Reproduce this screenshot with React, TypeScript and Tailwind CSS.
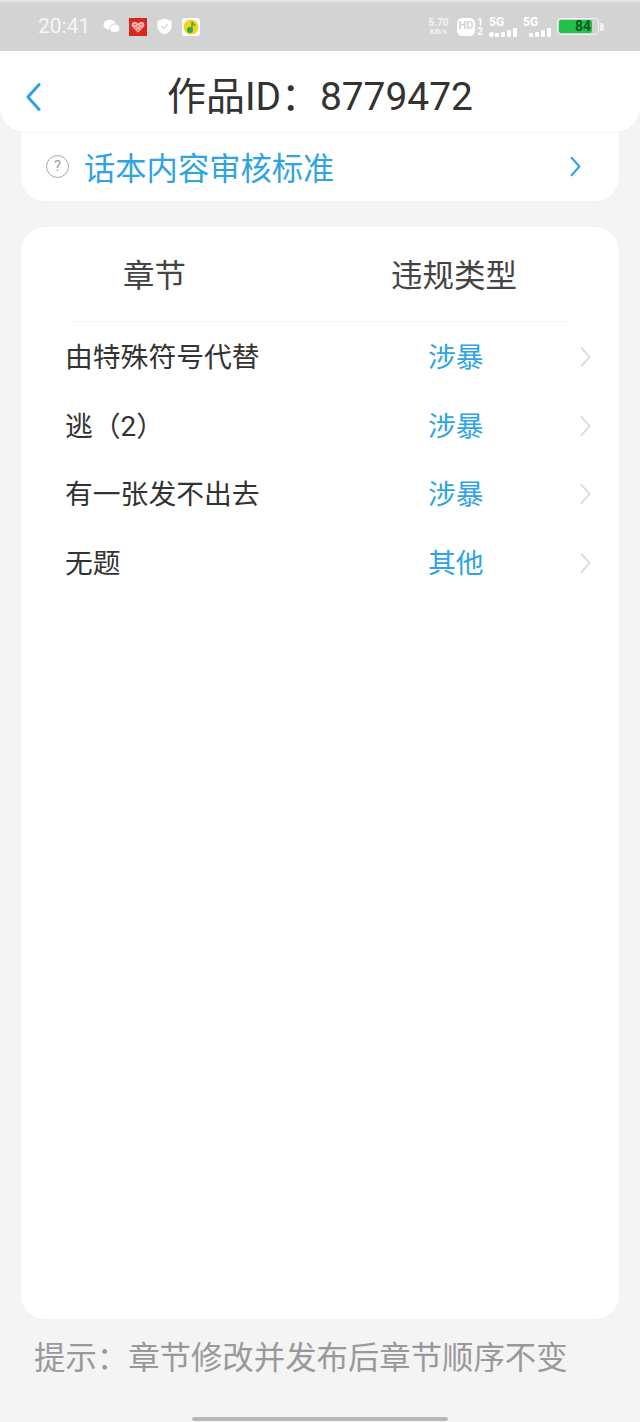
const cjk = "font-['Roboto','Noto_Sans_CJK_SC',sans-serif]";

const rows = [
  { name: "由特殊符号代替", type: "涉暴" },
  { name: "逃\uFF082\uFF09", type: "涉暴" },
  { name: "有一张发不出去", type: "涉暴" },
  { name: "无题", type: "其他" },
];

function Chevron({ className, width = 2.5, left = false }: { className: string; width?: number; left?: boolean }) {
  return (
    <svg viewBox="0 0 12 24" fill="none" stroke="currentColor" strokeWidth={width} strokeLinecap="round" strokeLinejoin="round" className={className}>
      <path d={left ? "M10.5 2 L1.5 12 L10.5 22" : "M1.5 2 L10.5 12 L1.5 22"} />
    </svg>
  );
}

function Signal({ bars }: { bars: number[] }) {
  return (
    <div className="flex items-end gap-[2px]">
      {bars.map((h, i) => (
        <div key={i} className="w-[4px] rounded-[1px] bg-white" style={{ height: h }} />
      ))}
    </div>
  );
}

function StatusBar() {
  return (
    <div className="flex h-[51px] shrink-0 items-center border-t-2 border-[#e4e4e4] bg-[#d3d3d3] pl-[38px] pr-[36px] text-white">
      <span className="text-[21px] leading-none text-[#f6f6f6]">20:41</span>
      {/* wechat */}
      <svg viewBox="0 0 18 16" className="ml-[13px] h-[15px] w-[17px]" fill="#fff">
        <ellipse cx="7" cy="6" rx="6.5" ry="5.5" />
        <ellipse cx="12.5" cy="10" rx="5.5" ry="4.6" stroke="#d3d3d3" strokeWidth="1" />
      </svg>
      {/* red heart app */}
      <div className="ml-[9px] flex h-[18px] w-[18px] items-center justify-center bg-[#d8281e]">
        <svg viewBox="0 0 16 16" className="h-[14px] w-[14px]" fill="#f3b4ae">
          <path d="M8 14.5 L1.6 8 C-.4 5.6 1 2 4 2 C5.8 2 7.2 3 8 4.4 C8.8 3 10.2 2 12 2 C15 2 16.4 5.6 14.4 8 Z" />
          <g fill="#d8281e">
            <circle cx="4.5" cy="5" r=".8" />
            <circle cx="8" cy="7" r=".8" />
            <circle cx="11.5" cy="5" r=".8" />
            <circle cx="5.5" cy="9" r=".8" />
            <circle cx="10.5" cy="9" r=".8" />
            <circle cx="8" cy="11.5" r=".8" />
          </g>
        </svg>
      </div>
      {/* shield */}
      <svg viewBox="0 0 16 18" className="ml-[10px] h-[17px] w-[15px]">
        <path d="M8 .5 L15.5 3 V9 C15.5 13 12 16 8 17.5 C4 16 .5 13 .5 9 V3 Z" fill="#fff" />
        <path d="M4.8 8.6 L7.2 11 L11.4 6.6" fill="none" stroke="#d3d3d3" strokeWidth="1.2" />
      </svg>
      {/* qq music */}
      <div className="ml-[10px] flex h-[18px] w-[18px] items-center justify-center rounded-[3px] bg-white">
        <svg viewBox="0 0 16 16" className="h-[16px] w-[16px]">
          <circle cx="8" cy="8" r="7.5" fill="#f5d31f" />
          <circle cx="7" cy="11" r="3" fill="#2fa84f" />
          <path d="M9 11 V3 C9.6 5 11.5 5.4 12 7" fill="none" stroke="#2fa84f" strokeWidth="1.4" />
        </svg>
      </div>

      <div className="ml-auto flex items-center">
        <div className="flex w-[21px] flex-col items-center text-[10px] font-bold leading-[10px] text-[#f4f4f4]">
          <span>5.70</span>
          <span className="text-[8px] leading-[8px]">KB/s</span>
        </div>
        <div className="ml-[8px] flex h-[18px] w-[18px] items-center justify-center rounded-[5px] bg-white text-[11px] font-bold text-[#d3d3d3]">
          HD
        </div>
        <div className="ml-[1px] flex w-[8px] flex-col items-center text-[10px] font-bold leading-[9px]">
          <span>1</span>
          <span>2</span>
        </div>
        <div className="ml-[5px] flex flex-col items-start">
          <span className="text-[12px] font-bold leading-[10px]">5G</span>
          <div className="mt-[1px] flex items-end gap-[1px]">
            <span className="h-[5px] w-[5px] rounded-full bg-white" />
            <Signal bars={[4, 5, 7, 9]} />
          </div>
        </div>
        <div className="ml-[6px] flex flex-col items-start">
          <span className="text-[12px] font-bold leading-[10px]">5G</span>
          <div className="ml-[6px] mt-[1px]">
            <Signal bars={[4, 5, 7, 9]} />
          </div>
        </div>
        <div className="ml-[6px] flex h-[17px] w-[42px] items-center rounded-[4px] border border-[#f2f2f2] p-[1px]">
          <div className="flex h-full w-[33px] items-center justify-end rounded-[2px] bg-[#22c24a] pr-[1px] text-[14px] font-bold text-[#0b5a1e]">
            84
          </div>
        </div>
        <div className="ml-[1px] h-[8px] w-[4px] rounded-r-[3px] bg-[#f2f2f2]" />
      </div>
    </div>
  );
}

export default function App() {
  return (
    <div className={`flex h-[1422px] w-[640px] flex-col overflow-hidden bg-[#f4f4f4] ${cjk}`}>
      <StatusBar />
      <header className="relative z-10 flex h-[81px] shrink-0 items-center justify-center rounded-b-[24px] bg-white pt-[12px] shadow-[0_1px_1px_rgba(0,0,0,0.04)]">
        <Chevron className="absolute left-[25px] top-[31px] h-[30px] w-[17px] text-[#2ea3e6]" width={2.4} left />
        <h1 className="text-[38.9px] leading-none text-[#333333]">{"作品ID\uFF1A8779472"}</h1>
      </header>

      <div className="mx-[21px] flex h-[69px] shrink-0 items-center rounded-b-[24px] bg-white pl-[25px] pr-[38px]">
        <div className="flex h-[23px] w-[23px] items-center justify-center rounded-full border border-[#a8a8a8] text-[15px] leading-none text-[#a0a0a0]">?</div>
        <span className="ml-[15px] pt-[6px] text-[31.3px] leading-none text-[#2fa3e4]">话本内容审核标准</span>
        <Chevron className="ml-auto h-[21px] w-[11px] text-[#2ea3e6]" width={2.4} />
      </div>

      <section className="mx-[21px] mt-[26px] flex h-[1092px] shrink-0 flex-col rounded-[24px] bg-white">
        <div className="flex h-[94px] shrink-0 items-center pt-[6px] text-[31.5px] leading-none text-[#444444]">
          <span className="w-[267px] text-center">章节</span>
          <span className="ml-[71px] w-[190px] text-center">违规类型</span>
        </div>
        <div className="mx-[49px] h-px shrink-0 bg-[#f5f5f5]" />
        <div className="flex flex-col pt-[2px]">
          {rows.map((r) => (
            <div key={r.name} className="flex h-[68.5px] items-center pl-[44px] text-[27.8px] leading-none">
              <span className="w-[363px] text-[#333333]">{r.name}</span>
              <span className="text-[#2fa3e4]">{r.type}</span>
              <Chevron className="-mt-[2px] ml-[96px] h-[22px] w-[11px] text-[#d9d9d9]" width={1.8} />
            </div>
          ))}
        </div>
      </section>

      <p className="ml-[34px] mt-[21px] text-[31.4px] leading-[38px] text-[#999999]">{"提示\uFF1A章节修改并发布后章节顺序不变"}</p>
      <div className="mx-auto mt-[39px] h-[4px] w-[256px] rounded-full bg-[#b8b8b8]" />
    </div>
  );
}
